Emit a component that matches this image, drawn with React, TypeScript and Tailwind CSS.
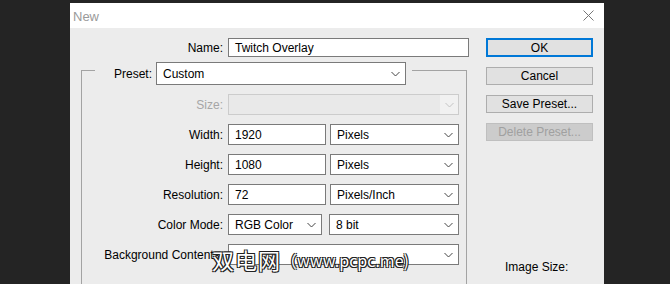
import React from "react";

const font = { fontFamily: '"Liberation Sans", Arial, sans-serif' };

function Chevron({ color = "#444" }: { color?: string }) {
  return (
    <svg width="9" height="6" viewBox="0 0 9 6" className="shrink-0">
      <polyline points="0.5,1 4.5,5 8.5,1" fill="none" stroke={color} strokeWidth="1" />
    </svg>
  );
}

function Select({ text, w }: { text: string; w: string }) {
  return (
    <div className={`${w} h-full flex items-center justify-between bg-white border border-[#7a7a7a] pl-[6px] pr-[5px]`}>
      <span className="pt-[2px]">{text}</span>
      <Chevron />
    </div>
  );
}

function Input({ text, w }: { text: string; w: string }) {
  return (
    <div className={`${w} h-full flex items-center bg-white border border-[#7a7a7a] pl-[6px]`}>
      <span className="pt-[2px]">{text}</span>
    </div>
  );
}

function Row({ label, children, disabled }: { label: string; children: React.ReactNode; disabled?: boolean }) {
  return (
    <div className="flex items-center h-[21px]">
      <div className={`w-[141px] shrink-0 text-right whitespace-nowrap pt-[2px] ${disabled ? "text-[#a6a6a6]" : "text-black"}`}>
        {label}
      </div>
      <div className="ml-[5px] flex h-full items-stretch">{children}</div>
    </div>
  );
}

export default function App() {
  return (
    <div className="w-[670px] h-[284px] bg-[#242424] overflow-hidden pl-[70px] pt-[3px] text-[12px] leading-[15px]" style={font}>
      <div className="w-[534px] h-[281px] flex flex-col bg-[#ececec]">
        {/* Title bar */}
        <div className="h-[25px] bg-white flex items-center justify-between pl-[3px] pr-[10px] shrink-0">
          <span className="text-[#9a9a9a] text-[13px] pt-[1px]">New</span>
          <svg width="11" height="11" viewBox="0 0 11 11">
            <line x1="0.5" y1="0.5" x2="10.5" y2="10.5" stroke="#777" strokeWidth="1" />
            <line x1="10.5" y1="0.5" x2="0.5" y2="10.5" stroke="#777" strokeWidth="1" />
          </svg>
        </div>

        {/* Body */}
        <div className="relative flex-1 flex pl-[11px] pt-[10px]">
          {/* Left column */}
          <div className="w-[388px] flex flex-col">
            {/* Name row */}
            <div className="flex items-center h-[19px]">
              <div className="w-[142px] text-right text-black pt-[2px]">Name:</div>
              <div className="ml-[5px] h-full flex">
                <Input text="Twitch Overlay" w="w-[241px]" />
              </div>
            </div>

            {/* Preset legend */}
            <div className="relative z-10 mt-[5px] ml-[14px] w-[317px] h-[23px] bg-[#ececec] flex items-center">
              <div className="w-[57px] text-right text-black pt-[2px]">Preset:</div>
              <div className="ml-[4px] h-full flex">
                <div className="w-[250px] h-full flex items-center justify-between bg-white border border-[#7a7a7a] pl-[6px] pr-[5px]">
                  <span className="pt-[2px]">Custom</span>
                  <Chevron />
                </div>
              </div>
            </div>

            {/* Group box */}
            <div className="mt-[-15px] w-[386px] flex-1 border-t border-l border-r border-[#a3a3a3] pt-[23px] flex flex-col gap-[9px]">
              <Row label="Size:" disabled>
                <div className="w-[231px] h-full flex border border-[#cccccc] bg-[#e9e9e9]">
                  <div className="flex-1" />
                  <div className="w-[18px] flex items-center justify-center bg-[#f1f1f1]">
                    <Chevron color="#c4c4c4" />
                  </div>
                </div>
              </Row>
              <Row label="Width:">
                <Input text="1920" w="w-[98px]" />
                <div className="w-[4px]" />
                <Select text="Pixels" w="w-[129px]" />
              </Row>
              <Row label="Height:">
                <Input text="1080" w="w-[98px]" />
                <div className="w-[4px]" />
                <Select text="Pixels" w="w-[129px]" />
              </Row>
              <Row label="Resolution:">
                <Input text="72" w="w-[98px]" />
                <div className="w-[4px]" />
                <Select text="Pixels/Inch" w="w-[129px]" />
              </Row>
              <Row label="Color Mode:">
                <Select text="RGB Color" w="w-[94px]" />
                <div className="w-[7px]" />
                <Select text="8 bit" w="w-[130px]" />
              </Row>
              <Row label="Background Contents:">
                <Select text="" w="w-[231px]" />
              </Row>
            </div>
          </div>

          {/* Right column */}
          <div className="ml-[17px] w-[107px] flex flex-col">
            <div className="h-[19px] border-2 border-[#0078d7] bg-[#e1e1e1] flex items-center justify-center text-black pt-[1px]">OK</div>
            <div className="mt-[10px] h-[18px] border border-[#adadad] bg-[#e1e1e1] flex items-center justify-center text-black pt-[1px]">Cancel</div>
            <div className="mt-[10px] h-[18px] border border-[#adadad] bg-[#e1e1e1] flex items-center justify-center text-black pt-[1px]">Save Preset...</div>
            <div className="mt-[10px] h-[18px] border border-[#bfbfbf] bg-[#cccccc] flex items-center justify-center text-[#a0a0a0] pt-[1px]">Delete Preset...</div>
            <div className="mt-[119px] pl-[19px] text-black">Image Size:</div>
          </div>

          {/* Watermark overlay */}
          <div
            className="absolute left-[142px] top-[218px] z-20 flex items-end whitespace-nowrap text-white [text-shadow:-1px_-1px_0_#222,1px_-1px_0_#222,-1px_1px_0_#222,1px_1px_0_#222]"
            style={{ fontFamily: '"Noto Sans CJK SC", "Liberation Sans", sans-serif' }}
          >
            <span className="text-[22px] leading-[26px] tracking-[1px]">双电网</span>
            <span className="text-[16px] leading-[24px]">（www.pcpc.me)</span>
          </div>
        </div>
      </div>
    </div>
  );
}
